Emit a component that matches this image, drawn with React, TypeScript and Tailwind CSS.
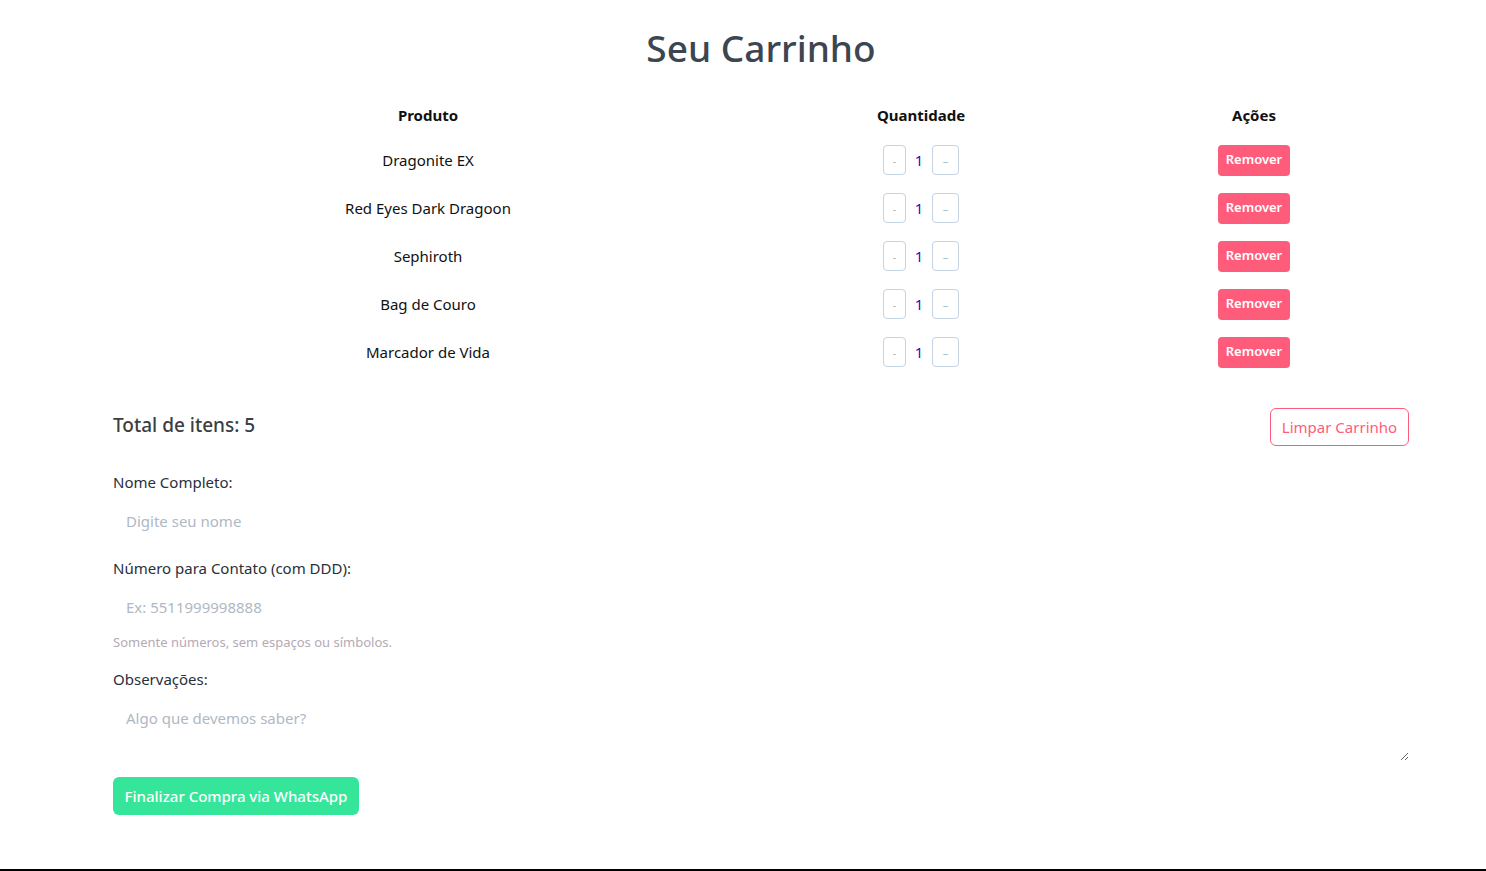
const items = [
  "Dragonite EX",
  "Red Eyes Dark Dragoon",
  "Sephiroth",
  "Bag de Couro",
  "Marcador de Vida",
];

const App: React.FC = () => {
  return (
    <div className="min-h-[871px] bg-white font-['Noto_Sans',sans-serif] flex flex-col">
      <div className="ml-[113px] w-[1296px]">
        <h1 className="text-center text-[37px] leading-none text-[#3c4650] font-medium pt-[29px]">
          Seu Carrinho
        </h1>

        {/* tabela */}
        <div className="mt-[34px] grid grid-cols-[630px_356px_310px] text-[15px] text-[#111]">
          <div className="text-center font-bold h-[36px] leading-[30px]">Produto</div>
          <div className="text-center font-bold h-[36px] leading-[30px]">Quantidade</div>
          <div className="text-center font-bold h-[36px] leading-[30px]">Ações</div>
          {items.map((name) => (
            <div key={name} className="contents">
              <div className="h-[48px] flex items-center justify-center">{name}</div>
              <div className="h-[48px] flex items-center justify-center gap-[8px]">
                <button className="w-[23px] h-[30px] border border-[#c5d4e3] rounded-[4px] text-[#c8a0b8] text-[11px] leading-none">
                  -
                </button>
                <span className="w-[10px] text-center text-[#1020c0] text-[15px]">1</span>
                <button className="w-[27px] h-[30px] border border-[#c5d4e3] rounded-[4px] text-[#a8bcd0] text-[11px] leading-none">
                  –
                </button>
              </div>
              <div className="h-[48px] flex items-center justify-center">
                <button className="bg-[#ff5c7c] text-white text-[13px] font-semibold rounded-[4px] w-[72px] h-[31px]">
                  Remover
                </button>
              </div>
            </div>
          ))}
        </div>

        {/* total */}
        <div className="mt-[30px] flex items-start justify-between">
          <h2 className="text-[19px] font-medium text-[#3a3f45] mt-[5px]">Total de itens: 5</h2>
          <button className="border border-[#ff5c7c] text-[#ff5c7c] text-[15px] rounded-[6px] w-[139px] h-[38px] mt-[2px]">
            Limpar Carrinho
          </button>
        </div>

        {/* formulario */}
        <div className="mt-[24px] flex flex-col text-[15px] text-[#2a2f3a]">
          <label className="leading-[24px]">Nome Completo:</label>
          <input
            placeholder="Digite seu nome"
            className="mt-[7px] h-[40px] px-[13px] outline-none placeholder:text-[#b0b8c4]"
          />
          <label className="mt-[15px] leading-[24px]">Número para Contato (com DDD):</label>
          <input
            placeholder="Ex: 5511999998888"
            className="mt-[7px] h-[40px] px-[13px] outline-none placeholder:text-[#b0b8c4]"
          />
          <small className="mt-[6px] text-[13px] text-[#b4aab4] leading-[18px]">
            Somente números, sem espaços ou símbolos.
          </small>
          <label className="mt-[16px] leading-[24px]">Observações:</label>
          <textarea
            placeholder="Algo que devemos saber?"
            className="mt-[8px] h-[62px] px-[13px] py-[8px] outline-none placeholder:text-[#b0b8c4]"
          />
          <div>
            <button className="mt-[16px] bg-[#35e69a] text-white font-medium text-[15px] rounded-[6px] w-[246px] h-[38px]">
              Finalizar Compra via WhatsApp
            </button>
          </div>
        </div>
      </div>
      <div className="mt-auto border-t-2 border-black" />
    </div>
  );
};

export default App;
